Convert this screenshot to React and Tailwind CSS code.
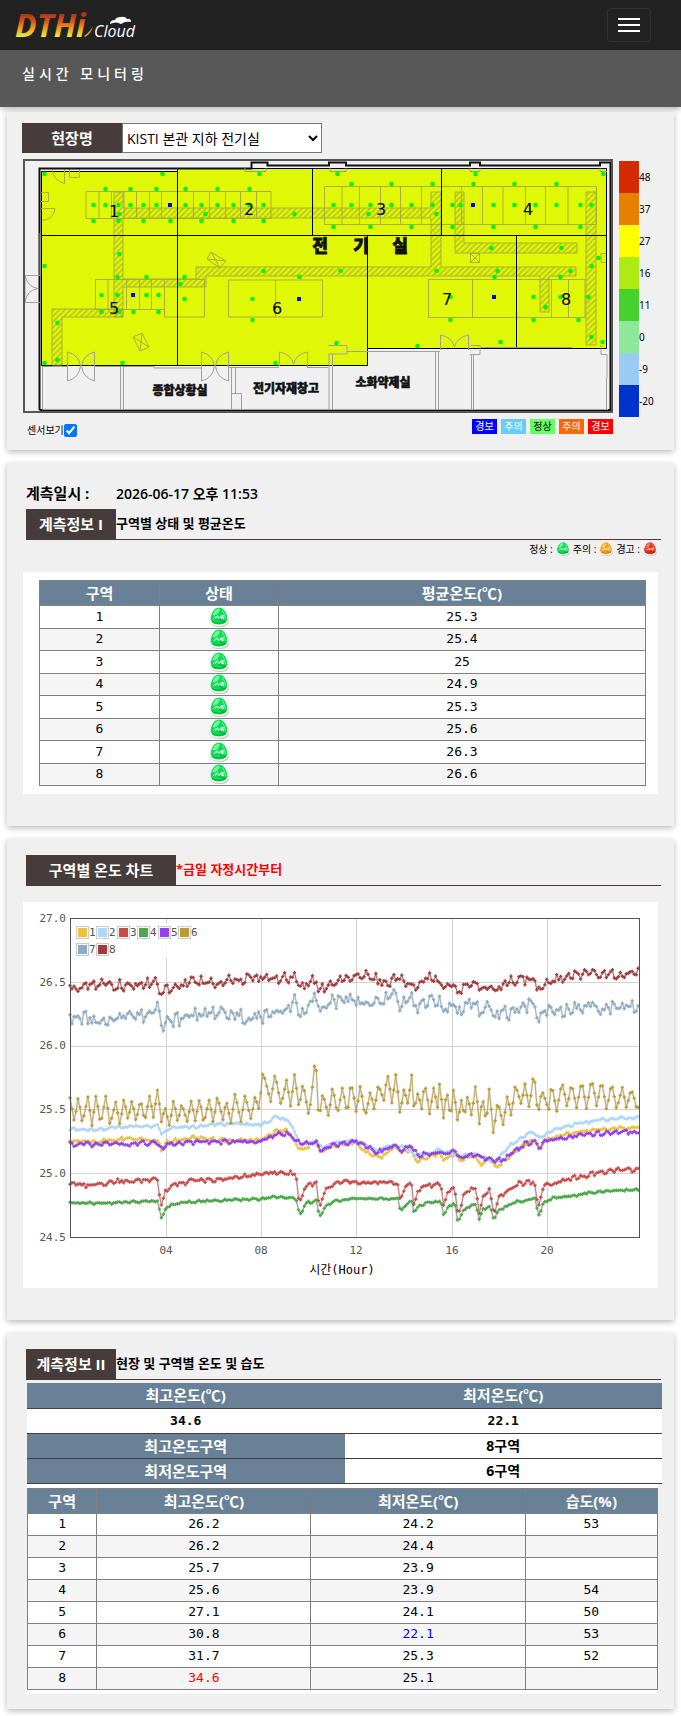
import React, { useState } from 'react';

const MONO = "font-['DejaVu_Sans_Mono','Noto_Sans_CJK_KR',monospace]";
const SANS = "font-['Open_Sans','Noto_Sans_CJK_KR',sans-serif]";

const STATUS_COLORS = {
  normal: { base: '#0edb55', light: '#6cfc9a', dark: '#08a53a' },
  caution: { base: '#f5a11c', light: '#ffc95e', dark: '#c87708' },
  warning: { base: '#e8321c', light: '#ff7a62', dark: '#b01505' },
};

const zones = [
  { id: 1, avg: '25.3', max: '26.2', min: '24.2', humidity: '53' },
  { id: 2, avg: '25.4', max: '26.2', min: '24.4', humidity: '' },
  { id: 3, avg: '25', max: '25.7', min: '23.9', humidity: '' },
  { id: 4, avg: '24.9', max: '25.6', min: '23.9', humidity: '54' },
  { id: 5, avg: '25.3', max: '27.1', min: '24.1', humidity: '50' },
  { id: 6, avg: '25.6', max: '30.8', min: '22.1', humidity: '53' },
  { id: 7, avg: '26.3', max: '31.7', min: '25.3', humidity: '52' },
  { id: 8, avg: '26.6', max: '34.6', min: '25.1', humidity: '' },
];

const SITE_MAX = '34.6';
const SITE_MIN = '22.1';

const scaleSteps = [
  { value: '48', color: 'bg-[#d42a00]' },
  { value: '37', color: 'bg-[#e68000]' },
  { value: '27', color: 'bg-[#ffff00]' },
  { value: '16', color: 'bg-[#aeea14]' },
  { value: '11', color: 'bg-[#47d12c]' },
  { value: '0', color: 'bg-[#8ee89a]' },
  { value: '-9', color: 'bg-[#9accf3]' },
  { value: '-20', color: 'bg-[#0033cc]' },
];

const levels = [
  { label: '경보', style: 'bg-[#0000ff] text-white' },
  { label: '주의', style: 'bg-[#66ccff] text-white' },
  { label: '정상', style: 'bg-[#66ff66] text-black' },
  { label: '주의', style: 'bg-[#ff6600] text-white' },
  { label: '경보', style: 'bg-[#ff0000] text-white' },
];

/**
 * Floor plan geometry
 */
const sensors = [
  [44, 174], [162, 174], [105, 189], [130, 189], [156, 189], [185, 189], [217, 189], [249, 189],
  [93, 205], [105, 205], [118, 205], [130, 205], [143, 205], [156, 205], [185, 205], [201, 205],
  [217, 205], [233, 205], [249, 205], [263, 205], [119, 214], [205, 214], [93, 221], [118, 221],
  [143, 221], [170, 221], [201, 221], [233, 221], [263, 221], [119, 254], [44, 266], [117, 277],
  [146, 277], [184, 277], [180, 284], [101, 295], [117, 295], [146, 295], [158, 295], [184, 299],
  [259, 174], [337, 174], [351, 184], [391, 184], [432, 184], [333, 205], [351, 205], [370, 205],
  [391, 205], [411, 205], [432, 205], [294, 214], [368, 214], [436, 214], [333, 227], [370, 227],
  [411, 227], [263, 271], [340, 271], [436, 271], [299, 277], [252, 299], [475, 174], [603, 174],
  [473, 184], [514, 184], [556, 184], [452, 205], [460, 205], [493, 205], [514, 205], [535, 205],
  [556, 205], [580, 205], [591, 205], [452, 227], [493, 227], [535, 227], [580, 227], [491, 248],
  [561, 248], [598, 258], [591, 266], [497, 271], [570, 271], [494, 277], [560, 277], [450, 297],
  [533, 297], [560, 297], [588, 297], [101, 312], [119, 312], [133, 312], [158, 312], [57, 323],
  [57, 360], [44, 363], [122, 363], [252, 320], [336, 343], [275, 363], [450, 320], [533, 320],
  [578, 320], [417, 346], [500, 342], [545, 307], [591, 337], [602, 342],
];

const humiditySensors = [
  [170, 205], [133, 295], [299, 299], [473, 205], [494, 297],
];

const ducts = [
  'M114 192H123V208H431V192H441V267H576V276H549V312H540V276H206V287H123V317H114Z M123 218V279H196V267H431V218Z',
  'M52 309H123V317H62V365H52Z',
  'M455 192H464V243H577V253H455Z',
  'M586 192H596V345H586Z',
];

const racks = [
  'M86 191.500H271V218.500H86Z M99 191V218 M111.500 191V218 M124 191V218 M136.500 191V218 M149.500 191V218 M161.500 191V218 M193.500 191V218 M209.500 191V218 M225.500 191V218 M240.500 191V218 M256.500 191V218',
  'M324.500 186.500H596.500V224.500H324.500Z M342 186V224 M359.500 186V224 M380.500 186V224 M400.500 186V224 M421.500 186V224 M461.500 186V224 M482.500 186V224 M503 186V224 M525.500 186V224 M545.500 186V224 M568 186V224',
  'M95.500 279.500H164.500V309.500H95.500Z M108 279V309 M126.500 279V309 M139.500 279V309 M151.500 279V309',
  'M164.500 279.500H204.500V317H164.500Z M228.500 280H322.500V317H228.500Z M275.500 280V317',
  'M428.500 279.500H585V317.500H428.500Z M472.500 279V317 M551.500 279V317 M568.500 279V317',
];

const zoneLabels = [
  ['1', 114, 217], ['2', 249, 215], ['3', 381, 215], ['4', 528, 215],
  ['5', 114, 314], ['6', 277, 314], ['7', 447, 305], ['8', 566, 305],
];

/**
 * Temperature traces. Keyframes sit on a grid three times finer than the
 * plot; pm keyframes continue PM_SHIFT units to the right of the am ones.
 */
const TRACE_SCALE = 3;
const TRACE_LEFT = 167;
const TRACE_TOP = 236;
const PM_SHIFT = 975;

const series = [
  {
    name: '1', color: '#edc240', swing: 6,
    am: [167, 905, 250, 908, 340, 897, 430, 905, 443, 932, 460, 908, 540, 895, 620, 903, 740, 903, 790, 874, 820, 875, 860, 932, 905, 907, 920, 943, 950, 920],
    pm: [45, 908, 80, 940, 130, 955, 165, 920, 185, 940, 215, 930, 230, 965, 300, 942, 315, 962, 345, 940, 360, 966, 400, 945, 425, 973, 450, 955, 470, 986, 510, 950, 560, 912, 590, 903, 600, 937, 615, 905, 700, 880, 800, 868, 898, 865],
  },
  {
    name: '2', color: '#afd8f8', swing: 5,
    am: [167, 868, 240, 873, 300, 865, 380, 860, 430, 860, 443, 882, 470, 866, 550, 862, 620, 854, 700, 855, 740, 858, 790, 832, 825, 846, 845, 885, 860, 915, 890, 912, 905, 900, 920, 925, 950, 912],
    pm: [50, 905, 80, 918, 120, 935, 150, 918, 200, 925, 230, 950, 300, 932, 350, 950, 400, 940, 430, 955, 470, 968, 510, 920, 560, 885, 585, 880, 600, 895, 650, 868, 740, 848, 800, 839, 898, 835],
  },
  {
    name: '3', color: '#cb4b4b', swing: 7,
    am: [167, 1035, 240, 1038, 300, 1026, 430, 1022, 436, 1072, 442, 1100, 453, 1055, 480, 1036, 530, 1026, 620, 1020, 740, 1005, 790, 999, 845, 1003, 853, 1082, 860, 1090, 868, 1050, 880, 1038, 907, 1030, 912, 1088, 918, 1100, 932, 1050, 955, 1034],
    pm: [30, 1027, 175, 1030, 182, 1086, 195, 1045, 216, 1030, 224, 1096, 235, 1060, 255, 1037, 305, 1035, 313, 1100, 325, 1056, 345, 1046, 355, 1118, 361, 1116, 375, 1060, 408, 1045, 420, 1118, 432, 1070, 450, 1045, 463, 1126, 478, 1070, 500, 1060, 525, 1036, 585, 1028, 593, 1085, 599, 1104, 612, 1036, 650, 1030, 700, 1017, 750, 1006, 820, 994, 898, 990],
  },
  {
    name: '4', color: '#4da74d', swing: 4,
    am: [167, 1092, 300, 1090, 430, 1085, 442, 1142, 455, 1105, 490, 1092, 560, 1085, 740, 1080, 780, 1072, 845, 1075, 853, 1116, 860, 1126, 872, 1092, 907, 1085, 912, 1118, 919, 1132, 932, 1100, 960, 1086],
    pm: [45, 1078, 177, 1079, 182, 1114, 216, 1082, 224, 1121, 240, 1100, 270, 1088, 305, 1086, 313, 1128, 330, 1097, 348, 1098, 355, 1143, 380, 1105, 410, 1092, 420, 1142, 432, 1108, 452, 1101, 463, 1142, 480, 1110, 530, 1088, 587, 1078, 593, 1112, 599, 1124, 612, 1093, 640, 1076, 700, 1070, 735, 1062, 800, 1056, 898, 1050],
  },
  {
    name: '5', color: '#9440ed', swing: 7,
    am: [167, 915, 300, 915, 430, 910, 443, 933, 460, 915, 550, 909, 740, 906, 790, 884, 820, 881, 860, 915, 905, 910, 920, 933, 950, 920],
    pm: [45, 906, 70, 910, 110, 940, 165, 919, 185, 934, 215, 920, 235, 948, 300, 941, 350, 939, 365, 956, 400, 946, 430, 954, 470, 965, 500, 957, 520, 938, 560, 913, 592, 906, 600, 930, 615, 906, 700, 891, 800, 881, 898, 877],
  },
  {
    name: '6', color: '#bd9b33', swing: 0,
    am: [167, 775, 180, 848, 192, 771, 204, 852, 221, 771, 233, 862, 245, 767, 259, 856, 275, 767, 287, 858, 304, 788, 317, 858, 329, 775, 341, 843, 353, 781, 365, 848, 379, 779, 391, 848, 406, 767, 417, 836, 430, 747, 442, 855, 451, 799, 466, 862, 478, 779, 490, 850, 502, 794, 519, 847, 531, 783, 543, 847, 556, 775, 568, 853, 585, 779, 597, 852, 609, 771, 627, 846, 635, 778, 650, 853, 662, 763, 680, 849, 692, 767, 710, 840, 722, 771, 734, 810, 746, 697, 769, 787, 782, 703, 800, 798, 817, 721, 829, 803, 841, 702, 854, 809, 866, 730, 884, 832, 895, 736, 901, 671, 907, 698, 912, 812, 919, 814, 925, 760, 943, 833, 955, 740, 967, 813],
    pm: [-3, 814, 9, 744, 21, 808, 27, 803, 33, 740, 40, 748, 51, 822, 63, 736, 75, 818, 81, 821, 93, 755, 105, 814, 117, 736, 135, 787, 140, 733, 146, 710, 158, 794, 170, 702, 182, 825, 194, 748, 206, 794, 217, 706, 224, 814, 236, 760, 248, 813, 254, 744, 260, 748, 271, 825, 283, 744, 295, 806, 301, 729, 313, 840, 319, 775, 325, 767, 331, 818, 337, 814, 343, 744, 355, 848, 367, 778, 373, 821, 378, 818, 385, 767, 397, 832, 409, 733, 420, 856, 426, 800, 432, 787, 438, 832, 444, 821, 450, 744, 462, 886, 474, 794, 480, 805, 492, 859, 504, 767, 516, 832, 528, 736, 546, 795, 557, 733, 570, 809, 581, 717, 587, 729, 593, 802, 600, 812, 605, 767, 611, 760, 628, 813, 635, 744, 641, 755, 652, 817, 665, 744, 671, 736, 683, 805, 695, 740, 700, 748, 712, 806, 724, 740, 730, 740, 742, 810, 754, 733, 761, 733, 772, 803, 784, 736, 790, 740, 802, 813, 814, 744, 820, 744, 832, 810, 849, 744, 861, 805, 873, 760, 880, 757, 892, 809, 898, 802],
  },
  {
    name: '7', color: '#8cacc6', swing: 22,
    am: [167, 532, 240, 540, 330, 535, 420, 522, 430, 508, 442, 570, 460, 550, 520, 530, 600, 525, 700, 532, 740, 530, 800, 512, 840, 490, 857, 533, 880, 505, 906, 468, 918, 530, 935, 495, 970, 483],
    pm: [15, 477, 50, 490, 130, 490, 170, 464, 182, 500, 216, 474, 228, 508, 250, 485, 300, 482, 315, 513, 345, 490, 355, 526, 370, 500, 405, 490, 420, 522, 450, 494, 465, 540, 480, 512, 500, 525, 550, 502, 582, 484, 598, 552, 610, 517, 650, 517, 700, 505, 755, 500, 780, 510, 855, 503, 898, 510],
  },
  {
    name: '8', color: '#a23c3c', swing: 16,
    am: [167, 442, 250, 438, 325, 440, 395, 435, 428, 428, 436, 460, 442, 464, 460, 446, 500, 438, 530, 426, 600, 428, 670, 421, 740, 416, 800, 418, 845, 410, 855, 440, 870, 437, 905, 416, 913, 453, 930, 440, 960, 427],
    pm: [20, 420, 95, 410, 135, 433, 165, 420, 215, 428, 225, 453, 250, 420, 290, 416, 310, 443, 345, 436, 355, 476, 365, 450, 385, 430, 405, 440, 460, 450, 490, 444, 500, 430, 585, 416, 595, 453, 605, 450, 635, 422, 700, 409, 750, 407, 898, 403],
  },
];

/**
 * Expand keyframes to one reading every five minutes
 */
const buildReadings = ({ am, pm, swing, name }) => {
  const keys = [];
  for (let i = 0; i < am.length; i += 2) keys.push([am[i], am[i + 1]]);
  for (let i = 0; i < pm.length; i += 2) keys.push([pm[i] + PM_SHIFT, pm[i + 1]]);

  const seed = Number(name);
  const readings = [];
  let k = 0;
  for (let i = 0; i < 287; i++) {
    const x = TRACE_LEFT + i * 5.96;
    while (k < keys.length - 2 && keys[k + 1][0] < x) k++;
    const [x0, y0] = keys[k];
    const [x1, y1] = keys[k + 1];
    const t = Math.min(1, Math.max(0, (x - x0) / (x1 - x0)));
    const rand = Math.abs(Math.sin((i + 1) * 12.9898 + seed * 78.233) * 43758.5453) % 1;
    const wobble = swing * (0.45 * Math.sin(i * 1.37 + seed) + (rand - 0.5) * 1.4);
    readings.push([
      (x - TRACE_LEFT) / TRACE_SCALE,
      (y0 + (y1 - y0) * t + wobble - TRACE_TOP) / TRACE_SCALE,
    ]);
  }
  return readings;
};

const Logo = () => (
  <svg width="130" height="44" viewBox="0 -6 130 44" role="img" aria-label="DTHi Cloud">
    <defs>
      <linearGradient id="flame" x1="0" y1="4" x2="0" y2="28" gradientUnits="userSpaceOnUse">
        <stop offset="0" stopColor="#a8321c" />
        <stop offset="0.35" stopColor="#d3581f" />
        <stop offset="0.65" stopColor="#f39a22" />
        <stop offset="1" stopColor="#e2f53a" />
      </linearGradient>
    </defs>
    <text x="0" y="28" fill="url(#flame)" className="font-['Open_Sans'] text-[32px] font-bold italic">DTHi</text>
    <path d="M69 27Q75 23 78 17Q76 25 70 28Z" fill="#f0a020" />
    <text x="79" y="28" fill="#fff" className="font-['Open_Sans'] text-[16px] italic">Cloud</text>
    <path d="M95 15Q95 11 100 11Q101 8 106 8Q110 7 112 10Q116 9 116 13Q110 12 106 15Q101 12 95 15Z" fill="#fff" />
  </svg>
);

const StatusIcon = ({ level, size, label }) => {
  const { base, light, dark } = STATUS_COLORS[level];
  return (
    <svg width={size} height={size} viewBox="0 0 20 20" role="img" aria-label={label} className="inline-block shrink-0">
      <path d="M1 15Q2 20 11 20Q19 20 20 15L17 10H4Z" fill="#cbc5c8" />
      <path d="M0.500 14Q1 18.500 9.500 19Q18 19 19 14L16 9H4Z" fill="#f6f6f6" />
      <path d="M10 0.500C6 0.500 3.500 4 2 9C0.500 14.500 4 17.500 10 17.500C16 17.500 19.500 14.500 18 9C16.500 4 14 0.500 10 0.500Z" fill={base} />
      <path d="M10 1.500C7 1.500 4.500 4.500 3.500 8.500Q8 8.500 10 5Q11.500 2.500 10 1.500Z" fill={light} />
      <path d="M13 3Q16 7 16.500 12" fill="none" stroke={light} strokeWidth="1" />
      <path d="M3 14.500Q9 18 17 14.500Q12 15 10 12" fill="none" stroke={dark} strokeWidth="1" />
      <path d="M4.500 11.500L6.500 9.500M6.500 11.500L8.500 8.500L9.500 11.500M10.500 11.500L12 8.500M12.500 11.500L13 8.500H15M13 10H15M13 11.500H15" fill="none" stroke="#e9fff0" strokeWidth="1" />
    </svg>
  );
};

const FloorPlan = ({ showSensors }) => (
  <svg viewBox="23 159 590 254" className="block h-auto w-full" role="img" aria-label="전기실 평면도">
    <defs>
      <pattern id="hatch" width="4" height="4" patternUnits="userSpaceOnUse" patternTransform="rotate(45)">
        <path d="M1 0V4" stroke="#9aa428" strokeWidth="1" />
      </pattern>
    </defs>

    {/* Room area */}
    <path d="M41.500 171.500H177.500V168.500H606.500V348.500H367.500V365.500H41.500Z" fill="#e0f806" stroke="#000" />

    {/* Racks and cable ducts */}
    <g fill="none" stroke="#a9b03c" strokeWidth="1">
      {racks.map((d) => <path key={d} d={d} />)}
      {ducts.map((d) => <path key={d} d={d} fill="url(#hatch)" fillRule="evenodd" />)}
      <path d="M211 252L226 261L220 268L207 259ZM211 252L220 268M226 261L207 259" />
      <path d="M133 337L142 333L149 347L140 351ZM133 337L149 347M142 333L140 351" />
      <path d="M470.500 253.500H479.500V262.500H470.500ZM470 253L480 263M480 253L470 263" />
      <path d="M69.500 169V177.500H79.500V169M40 192.500H48.500V201.500H40M40 208.500H55Q54 219 42 220.500M52 169Q54 181 64.500 183.500V169M606 253.500H601V262.500H606" />
    </g>

    {/* Zone borders */}
    <path d="M41 235.500H606M177.500 168V365M312.500 168V235M441.500 168V235M367.500 235V365M516.500 235V348" fill="none" stroke="#000" />

    {/* Outer walls */}
    <path d="M39.500 410V168.500H251.500V162.500H267.500V165.500H329V162.500H346V165.500H470V162.500H480V165.500H600V162.500H610.500V410H39.500" fill="none" stroke="#111" strokeWidth="2" />
    <path d="M245 168V171.500H266V168M330 168V171.500H346V168M470 168V171.500H480V168M600 168V171.500H607M40 233V275" fill="none" stroke="#999" />

    {/* Lower rooms and doors */}
    <g fill="none" stroke="#a0a0a0" strokeWidth="1">
      <path d="M42.500 366V409.500H608M42 366.500H67M94 366.500H154V368H201M228 367.500H279M307 367.500H328M120.500 367V409M123.500 367V409M231.500 367V409M235.500 368V393.500H231M235 393.500H241.500V409M328.500 345.500H347V354H329V409M332.500 354V409M347 351.500H440M435.500 351V409M438.500 351V409M471.500 354V409M473.500 354V409M470.500 345.500H480V354.500H470M480 347.500H572M601 345V354.500H607V378M606.500 378V409" />
      <path d="M67.500 352V381Q79 378 80.500 366Q79 355 67.500 352M94.500 352V381Q83 378 81.500 366Q83 355 94.500 352" />
      <path d="M201.500 352V381Q213 378 214.500 366Q213 355 201.500 352M228.500 352V381Q217 378 215.500 366Q217 355 228.500 352" />
      <path d="M279.500 366V352Q291 354 293.500 364Q296 354 307.500 352V367M440.500 350V335Q452 337 454.500 347Q457 337 468.500 335V350" />
      <path d="M40 275.500H25V302.500H40M25 275Q27 287 38 288.500Q27 290 25 302" />
    </g>

    {showSensors && (
      <g>
        {sensors.map(([x, y], i) => <circle key={i} cx={x + 0.5} cy={y} r="2.300" fill="#00f40c" />)}
        {humiditySensors.map(([x, y]) => <rect key={x} x={x - 2} y={y - 2} width="4" height="4" fill="#0000f0" />)}
      </g>
    )}

    <g textAnchor="middle" fill="#000" className="font-['DejaVu_Sans'] text-[16px]">
      {zoneLabels.map(([text, x, y]) => <text key={text} x={x} y={y}>{text}</text>)}
    </g>
    <g textAnchor="middle" fill="#111" stroke="#111" strokeWidth="0.800" className="font-['Noto_Sans_CJK_KR'] text-[17px] font-black">
      <text x="320" y="252">전</text>
      <text x="361" y="252">기</text>
      <text x="400" y="252">실</text>
    </g>
    <g textAnchor="middle" fill="#111" stroke="#111" strokeWidth="0.500" className="font-['Noto_Sans_CJK_KR'] text-[12px] font-black">
      <text x="180" y="395">종합상황실</text>
      <text x="286" y="393">전기자재창고</text>
      <text x="383" y="387">소화약제실</text>
    </g>
    <rect x="24" y="160" width="588" height="252" fill="none" stroke="#555" strokeWidth="2" />
  </svg>
);

const TemperatureChart = () => {
  const yTicks = ['27.0', '26.5', '26.0', '25.5', '25.0', '24.5'];
  const xTicks = [['04', 96], ['08', 191], ['12', 286], ['16', 382], ['20', 477]];

  return (
    <svg viewBox="0 0 635 386" className="block h-auto w-full" role="img" aria-label="구역별 온도 차트">
      <g transform="translate(47 16)">
        <g stroke="#d2d2d2">
          {xTicks.map(([label, x]) => <path key={label} d={`M${x + 0.5} 0V319`} />)}
          {[64, 128, 191, 255].map((y) => <path key={y} d={`M0 ${y + 0.5}H569`} />)}
        </g>

        {series.map((s) => {
          const readings = buildReadings(s);
          const line = readings.map(([x, y]) => `${x.toFixed(1)},${y.toFixed(1)}`).join(' ');
          const marks = readings
            .map(([x, y]) => `M${(x - 1.7).toFixed(1)} ${y.toFixed(1)}h3.400m-1.700 -1.700v3.400`)
            .join('');
          return (
            <g key={s.name} fill="none">
              <polyline points={line} stroke="#000" strokeOpacity="0.15" strokeWidth="2" />
              <polyline points={line} stroke={s.color} strokeOpacity="0.7" strokeWidth="1" />
              <path d={marks} stroke={s.color} strokeWidth="1.400" />
            </g>
          );
        })}

        <rect x="0.500" y="0.500" width="569" height="319" fill="none" stroke="#545454" />

        {/* Legend */}
        <rect x="5" y="5" width="125" height="35" fill="#fff" fillOpacity="0.85" />
        {series.map((s, i) => {
          const x = Math.round(6 + (i % 6) * 20.4);
          const y = 8 + Math.floor(i / 6) * 17;
          return (
            <g key={s.name}>
              <rect x={x + 0.5} y={y + 0.5} width="12" height="12" fill="#fff" stroke="#ccc" />
              <rect x={x + 2} y={y + 2} width="9" height="9" fill={s.color} />
              <text x={x + 13} y={y + 10} fill="#545454" className="font-['DejaVu_Sans_Mono'] text-[11px]">{s.name}</text>
            </g>
          );
        })}
      </g>

      <g fill="#545454" className="font-['DejaVu_Sans_Mono'] text-[11px]">
        {yTicks.map((label, i) => <text key={label} x="43" y={20 + Math.round(i * 63.7)} textAnchor="end">{label}</text>)}
        {xTicks.map(([label, x]) => <text key={label} x={x + 47} y="352" textAnchor="middle">{label}</text>)}
      </g>
      <text x="319" y="372" textAnchor="middle" fill="#000" className="font-['DejaVu_Sans_Mono','Noto_Sans_CJK_KR'] text-[12px]">시간(Hour)</text>
    </svg>
  );
};

const Card = ({ className, children }) => (
  <section className={`bg-[#f0f0f0] shadow-[0_2px_6px_rgba(0,0,0,0.28)] ${className}`}>{children}</section>
);

const SectionTitle = ({ title, note, wide, noteColor = 'text-black' }) => (
  <div className="mr-[13px] ml-[19px] flex h-[31px] items-stretch border-b border-[#463c3c]">
    <h2 className={`flex items-center justify-center bg-[#463c3c] text-[15px] font-bold text-white ${wide ? 'w-[150px]' : 'w-[90px]'}`}>
      {title}
    </h2>
    <p className={`flex items-center text-[13px] font-bold ${noteColor}`}>{note}</p>
  </div>
);

export default function App() {
  const [showSensors, setShowSensors] = useState(true);

  return (
    <div className={`min-h-screen bg-white pb-[7px] text-black ${SANS}`}>
      <nav className="flex h-[50px] items-center justify-between bg-[#222] pr-[30px] pl-[15px]">
        <a href="#home"><Logo /></a>
        <button
          type="button"
          aria-label="메뉴"
          className="flex h-[34px] w-11 flex-col items-center justify-center gap-1 rounded border border-[#333]"
        >
          <span className="h-[2px] w-[22px] bg-white" />
          <span className="h-[2px] w-[22px] bg-white" />
          <span className="h-[2px] w-[22px] bg-white" />
        </button>
      </nav>
      <header className="h-[57px] bg-[#585858] pt-[14px] pl-[22px] shadow-[0_2px_6px_rgba(0,0,0,0.3)]">
        <h1 className="text-[14px] leading-5 font-medium tracking-[4px] text-white">실시간 모니터링</h1>
      </header>

      <main className="mx-[7px] flex flex-col gap-[13px] pt-[5px]">
        {/* Floor plan */}
        <Card className="h-[338px] pt-[11px]">
          <div className="ml-[15px] flex h-[30px]">
            <label htmlFor="site" className="flex w-[100px] items-center justify-center bg-[#463c3c] text-[15px] font-bold text-white">
              현장명
            </label>
            <select id="site" className="w-[200px] border border-[#767676] bg-white text-[14px]">
              <option>KISTI 본관 지하 전기실</option>
            </select>
          </div>
          <div className="mt-[6px] ml-4 flex gap-[6px]">
            <div className="min-w-0 flex-1">
              <FloorPlan showSensors={showSensors} />
              <div className="mt-[6px] flex items-start justify-between">
                <div className="flex items-center pt-1 pl-1">
                  <label htmlFor="sensors" className="text-[10px] leading-[15px]">센서보기</label>
                  <input
                    id="sensors"
                    type="checkbox"
                    checked={showSensors}
                    onChange={(e) => setShowSensors(e.target.checked)}
                    className="size-[13px]"
                  />
                </div>
                <ul className="flex gap-[4px]">
                  {levels.map((level, i) => (
                    <li key={i} className={`w-[25px] text-center text-[10px] leading-[15px] ${level.style}`}>{level.label}</li>
                  ))}
                </ul>
              </div>
            </div>
            <ul className="w-[55px] pt-[2px]">
              {scaleSteps.map((step) => (
                <li key={step.value} className="flex h-8 items-center font-['Noto_Sans'] text-[10px]">
                  <span className={`h-8 w-5 ${step.color}`} />
                  {step.value}
                </li>
              ))}
            </ul>
          </div>
        </Card>

        {/* Zone status */}
        <Card className="pt-[18px] pb-8">
          <div className="mb-1 ml-[19px] flex h-6 items-center font-bold">
            <span className="w-[90px] text-[15px]">계측일시 :</span>
            <time className="text-[14px] font-semibold">2026-06-17 오후 11:53</time>
          </div>
          <SectionTitle title="계측정보 I" note="구역별 상태 및 평균온도" />
          <div className="mr-[17px] flex h-8 items-start justify-end gap-[3px] pt-px text-[10px] leading-4">
            <span className="flex items-center gap-[3px]">정상 : <StatusIcon level="normal" size={14} label="정상" /></span>
            <span className="flex items-center gap-[3px]">주의 : <StatusIcon level="caution" size={14} label="주의" /></span>
            <span className="flex items-center gap-[3px]">경고 : <StatusIcon level="warning" size={14} label="경고" /></span>
          </div>
          <div className={`mx-4 bg-white pt-2 pr-[12px] pb-2 pl-4 ${MONO}`}>
            <table className="h-[206px] w-full table-fixed border-collapse text-center text-[13px] leading-4 [&_td]:border [&_td]:border-[#808080] [&_th]:border [&_th]:border-[#808080]">
              <colgroup>
                <col className="w-[120px]" />
                <col className="w-[119px]" />
                <col />
              </colgroup>
              <thead>
                <tr className={`h-[25px] bg-[#688197] text-[15px] text-white ${SANS}`}>
                  <th>구역</th>
                  <th>상태</th>
                  <th>평균온도(℃)</th>
                </tr>
              </thead>
              <tbody>
                {zones.map((zone) => (
                  <tr key={zone.id} className="odd:bg-white even:bg-[#f5f5f5]">
                    <td>{zone.id}</td>
                    <td>
                      <span className="flex justify-center"><StatusIcon level="normal" size={20} label="정상" /></span>
                    </td>
                    <td>{zone.avg}</td>
                  </tr>
                ))}
              </tbody>
            </table>
          </div>
        </Card>

        {/* Temperature chart */}
        <Card className="pt-4 pb-8">
          <SectionTitle title="구역별 온도 차트" note="*금일 자정시간부터" noteColor="text-[#ff0000]" wide />
          <div className="mx-4 mt-4 bg-white">
            <TemperatureChart />
          </div>
        </Card>

        {/* Temperature and humidity by zone */}
        <Card className="pt-4 pb-[15px]">
          <SectionTitle title="계측정보 II" note="현장 및 구역별 온도 및 습도" />
          <table className={`mt-[3px] mr-3 ml-5 w-[calc(100%-32px)] table-fixed border-collapse bg-white text-center leading-4 ${SANS}`}>
            <tbody>
              <tr className="h-[25px] border-b border-[#463c3c] bg-[#688197] text-[15px] text-white">
                <th>최고온도(℃)</th>
                <th>최저온도(℃)</th>
              </tr>
              <tr className={`h-[25px] border-b border-[#463c3c] text-[13px] font-bold ${MONO}`}>
                <td>{SITE_MAX}</td>
                <td>{SITE_MIN}</td>
              </tr>
              <tr className="h-[25px] border-b border-[#463c3c] font-bold">
                <th className="bg-[#688197] text-[15px] text-white">최고온도구역</th>
                <td className="text-[14px]">8구역</td>
              </tr>
              <tr className="h-[25px] border-b border-[#463c3c] font-bold">
                <th className="bg-[#688197] text-[15px] text-white">최저온도구역</th>
                <td className="text-[14px]">6구역</td>
              </tr>
            </tbody>
          </table>
          <div className={`mr-4 ml-5 bg-white pt-1 pb-1 ${MONO}`}>
            <table className="w-full table-fixed border-collapse text-center text-[13px] leading-4 [&_td]:border [&_td]:border-[#808080] [&_th]:border [&_th]:border-[#808080]">
              <colgroup>
                <col className="w-[11%]" />
                <col className="w-[34%]" />
                <col className="w-[34%]" />
                <col className="w-[21%]" />
              </colgroup>
              <thead>
                <tr className={`h-[25px] bg-[#688197] text-[15px] text-white ${SANS}`}>
                  <th>구역</th>
                  <th>최고온도(℃)</th>
                  <th>최저온도(℃)</th>
                  <th>습도(%)</th>
                </tr>
              </thead>
              <tbody>
                {zones.map((zone) => (
                  <tr key={zone.id} className="h-[22px] odd:bg-white even:bg-[#f5f5f5]">
                    <td>{zone.id}</td>
                    <td className={zone.max === SITE_MAX ? 'text-[#ff0000]' : ''}>{zone.max}</td>
                    <td className={zone.min === SITE_MIN ? 'text-[#0000ff]' : ''}>{zone.min}</td>
                    <td>{zone.humidity}</td>
                  </tr>
                ))}
              </tbody>
            </table>
          </div>
        </Card>
      </main>
    </div>
  );
}
